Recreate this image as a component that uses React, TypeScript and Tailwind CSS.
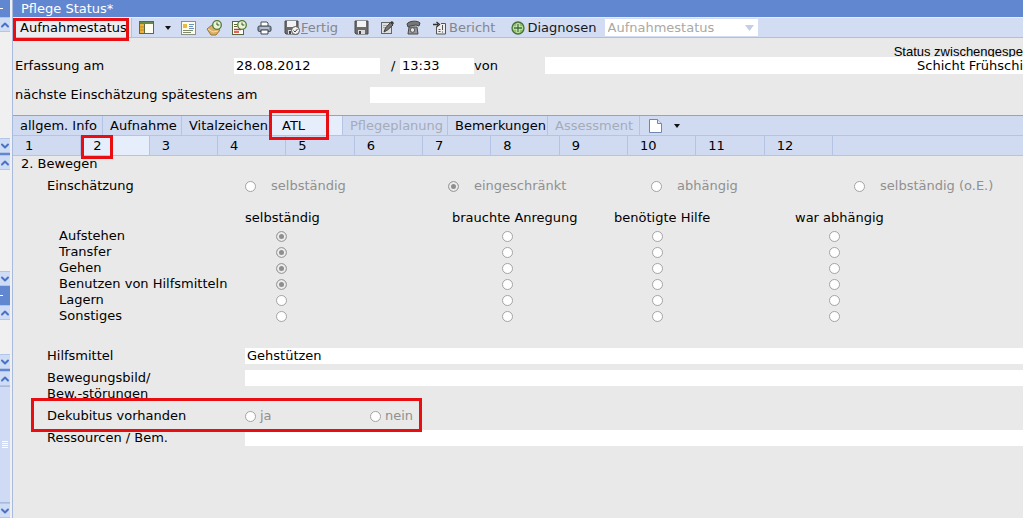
import { ChevronDown, ChevronUp } from "lucide-react";

const tabs = [
    { name: "allgem. Info", width: "w-[90px]" },
    { name: "Aufnahme", width: "w-[79px]" },
    { name: "Vitalzeichen", width: "w-[90px]" },
    { name: "ATL", width: "w-[71px]", active: true },
    { name: "Pflegeplanung", width: "w-[105px]", disabled: true },
    { name: "Bemerkungen", width: "w-[100px]" },
    { name: "Assessment", width: "w-[92px]", disabled: true },
];

const pages = [1, 2, 3, 4, 5, 6, 7, 8, 9, 10, 11, 12];

const levels = ["selbständig", "eingeschränkt", "abhängig", "selbständig (o.E.)"];

const columns = [
    { name: "selbständig", cell: "pl-[31px]" },
    { name: "brauchte Anregung", cell: "pl-[50px]" },
    { name: "benötigte Hilfe", cell: "pl-[38px]" },
    { name: "war abhängig", cell: "pl-[34px]" },
];

const activities = [
    { name: "Aufstehen", value: 0 },
    { name: "Transfer", value: 0 },
    { name: "Gehen", value: 0 },
    { name: "Benutzen von Hilfsmitteln", value: 0 },
    { name: "Lagern", value: -1 },
    { name: "Sonstiges", value: -1 },
];

const radio =
    "block h-[11px] w-[11px] shrink-0 appearance-none rounded-full border border-[#a3a3a3] bg-white checked:bg-[#8e8e8e] checked:shadow-[inset_0_0_0_2px_#ececec]";

const field = "min-w-0 bg-white px-[2px] outline-none";

// red frame around a part of the form
function Mark({ className }: { className: string }) {
    return <span aria-hidden="true" className={`pointer-events-none absolute z-10 border-3 border-[#e90e12] ${className}`} />;
}

function Caret() {
    return (
        <svg width="6" height="4" viewBox="0 0 6 4">
            <path d="M0 0h6L3 4z" fill="#111" />
        </svg>
    );
}

function LayoutIcon() {
    return (
        <svg width="15" height="13" viewBox="0 0 15 13">
            <rect x=".5" y=".5" width="14" height="12" fill="#fffdf0" stroke="#5d6b3a" />
            <path d="M1 1h13v2H1z" fill="#5f8a4c" />
            <path d="M1 3h4v9H1z" fill="#e8b33a" />
            <path d="M5.500 3v9" stroke="#5d6b3a" />
            <path d="M1 6h4M1 9h4" stroke="#c58a20" />
        </svg>
    );
}

function ListIcon() {
    return (
        <svg width="15" height="14" viewBox="0 0 15 14">
            <rect x=".5" y=".5" width="14" height="13" fill="#fdfbe9" stroke="#8b8f86" />
            <path d="M2 3h4v4H2z" fill="#e6bd3e" />
            <path d="M8 3.500h5M8 5.500h4M8 7.500h5" stroke="#6b8fc0" />
            <path d="M2 9.500h10M2 11.500h8" stroke="#7f8a6a" />
        </svg>
    );
}

function Clock() {
    return (
        <g>
            <circle cx="11" cy="5" r="4.300" fill="#e9f3d6" stroke="#4f7a34" strokeWidth="1.300" />
            <path d="M11 2.500V5h2.300" fill="none" stroke="#37502a" />
        </g>
    );
}

function HandClockIcon() {
    return (
        <svg width="17" height="16" viewBox="0 0 17 16">
            <path d="M1 9l5-4 8 5-4 5H5z" fill="#d9ae68" stroke="#9c7636" />
            <path d="M2 9l5 3 5-1" fill="none" stroke="#f4dcae" />
            <Clock />
        </svg>
    );
}

function ReportClockIcon() {
    return (
        <svg width="17" height="16" viewBox="0 0 17 16">
            <rect x="1.500" y="1.500" width="11" height="13" fill="#fff" stroke="#55663c" />
            <path d="M3 4.500h3M3 6.500h3" stroke="#5d6b3a" />
            <path d="M3 9.500h7M3 12h5" stroke="#dc2f22" strokeWidth="1.500" />
            <Clock />
        </svg>
    );
}

function PrinterIcon() {
    return (
        <svg width="15" height="14" viewBox="0 0 15 14">
            <path d="M4 5V1h6l1 1v3" fill="#fff" stroke="#444e5c" />
            <rect x="1" y="5" width="13" height="5.500" rx="1.500" fill="#8c98a6" stroke="#3c4654" />
            <path d="M4 9h7v4H4z" fill="#fff" stroke="#3c4654" />
            <path d="M3 7h9" stroke="#dfe5ec" />
        </svg>
    );
}

function DiskIcon({ checked = false }: { checked?: boolean }) {
    return (
        <svg width="16" height="15" viewBox="0 0 16 15">
            <path d="M1 1h13v13H2l-1-1z" fill="#6b6b6b" stroke="#4a4a4a" />
            <path d="M3 1h9v6H3z" fill="#f2f2f2" />
            <path d="M4 10h7v4H4z" fill="#d9d9d9" />
            <path d="M5 11h2v3H5z" fill="#444" />
            {checked && (
                <g>
                    <circle cx="11.500" cy="10.500" r="4" fill="#f1f1f1" stroke="#555" />
                    <path d="M9.500 10.500l1.500 1.500 2.500-3" fill="none" stroke="#444" />
                </g>
            )}
        </svg>
    );
}

function EditIcon() {
    return (
        <svg width="15" height="15" viewBox="0 0 15 15">
            <rect x="1.500" y="2.500" width="10" height="11" fill="#dedede" stroke="#666" />
            <path d="M3 5.500h4M3 7.500h3" stroke="#aaa" />
            <path d="M4 12l1.500-4 5-5.500 2.500 2.500-5.500 5z" fill="#777" stroke="#3d3d3d" />
            <path d="M10.500 2l1.500-1 2 2-1 1.500z" fill="#333" />
        </svg>
    );
}

function PhoneIcon() {
    return (
        <svg width="16" height="15" viewBox="0 0 16 15">
            <path d="M2 4c1-3 11-4 13-1l-1 3-3-1-6 1-2 1z" fill="#777" stroke="#444" />
            <path d="M4 7h8l1 7H3z" fill="#999" stroke="#4a4a4a" />
            <circle cx="7.500" cy="10" r="2.300" fill="#e4e4e4" stroke="#555" />
        </svg>
    );
}

function ReportIcon() {
    return (
        <svg width="14" height="14" viewBox="0 0 14 14">
            <path d="M3.500 6v7h9V2.500H8" fill="#eee" stroke="#555" />
            <path d="M0 3.500h5M3.500 1l3 2.500-3 2.500" fill="none" stroke="#333" strokeWidth="1.300" />
            <path d="M9.500 4v5M9.500 10.500v1M5.500 8.500h2M5.500 10.500h2" stroke="#555" />
        </svg>
    );
}

function PlusIcon() {
    return (
        <svg width="14" height="14" viewBox="0 0 14 14">
            <circle cx="7" cy="7" r="6" fill="#8cc46c" stroke="#4b6f3c" strokeWidth="1.300" />
            <path d="M7 2.500v9M2.500 7h9" stroke="#e4f5d8" strokeWidth="3" />
            <path d="M7 3v8M3 7h8" stroke="#3b6a2c" strokeWidth="1.300" />
        </svg>
    );
}

function ScrollButton({ up = false }: { up?: boolean }) {
    const Icon = up ? ChevronUp : ChevronDown;
    return (
        <button
            aria-label={up ? "nach oben" : "nach unten"}
            className="flex h-[15px] w-full shrink-0 items-center justify-center border-y border-[#b4c5ea] bg-[#cfdcf5]"
        >
            <Icon className="h-3 w-3 shrink-0 text-[#4a72c4]" strokeWidth={4} />
        </button>
    );
}

function Sidebar() {
    return (
        <aside className="flex w-[13px] shrink-0 flex-col border-r border-[#a9bbdd] bg-[#f0f0f0] pr-[2px]">
            <div className="flex h-[17px] items-center bg-[#6187d1]">
                <span className="h-px w-[3px] bg-white" />
            </div>
            <ScrollButton up />
            <div className="h-[106px]" />
            <ScrollButton />
            <div className="h-[2px] bg-[#6187d1]" />
            <ScrollButton up />
            <div className="h-[101px]" />
            <ScrollButton />
            <div className="flex h-[19px] items-center bg-[#6187d1]">
                <span className="h-px w-[3px] bg-white" />
            </div>
            <ScrollButton up />
            <div className="h-[34px]" />
            <ScrollButton />
            <div className="h-[2px] bg-[#6187d1]" />
            <ScrollButton up />
            <div className="flex flex-1 flex-col items-center justify-center gap-px border-y border-[#a9bbdd] bg-[#cfdaf4]">
                <span className="h-px w-[6px] bg-white" />
                <span className="h-px w-[6px] bg-white" />
                <span className="h-px w-[6px] bg-white" />
                <span className="h-px w-[6px] bg-white" />
            </div>
            <ScrollButton />
        </aside>
    );
}

function Toolbar() {
    return (
        <div className="flex h-[21px] items-center border-y border-t-[#e4ecf8] border-b-[#afbfdf] bg-[#d2dcf2]">
            <div className="relative flex h-full w-[119px] shrink-0 items-center border-r border-[#b4c2e2] bg-[#ebedf1] pl-[7px]">
                Aufnahmestatus
                <Mark className="top-0 left-0 h-[23px] w-[116px]" />
            </div>
            <div className="flex shrink-0 items-center pl-[7px] text-[#84868c]">
                <button aria-label="Ansicht"><LayoutIcon /></button>
                <button aria-label="Ansicht wählen" className="ml-[11px]"><Caret /></button>
                <button aria-label="Liste" className="ml-[10px]"><ListIcon /></button>
                <button aria-label="Termin" className="ml-[10px]"><HandClockIcon /></button>
                <button aria-label="Verlauf" className="ml-2"><ReportClockIcon /></button>
                <button aria-label="Drucken" className="ml-[9px]"><PrinterIcon /></button>
                <button className="ml-3 flex items-center gap-px">
                    <DiskIcon checked />
                    <span><u>F</u>ertig</span>
                </button>
                <button aria-label="Speichern" className="ml-4"><DiskIcon /></button>
                <button aria-label="Bearbeiten" className="ml-[10px]"><EditIcon /></button>
                <button aria-label="Telefon" className="ml-[10px]"><PhoneIcon /></button>
                <button className="ml-3 flex items-center gap-[2px]"><ReportIcon />Bericht</button>
                <button className="ml-4 flex items-center gap-[2px] text-[#16181d]"><PlusIcon />Diagnosen</button>
            </div>
            <div className="relative ml-2 flex h-[17px] w-[153px] shrink-0 items-center">
                <select aria-label="Status" disabled className="h-full w-full appearance-none bg-white px-[3px] leading-4 text-[#aaa9a3] opacity-100">
                    <option>Aufnahmestatus</option>
                </select>
                <svg className="pointer-events-none absolute right-1" width="9" height="6" viewBox="0 0 9 6">
                    <path d="M0 0h9L4.500 6z" fill="#c3cfe6" />
                </svg>
            </div>
        </div>
    );
}

function Header() {
    return (
        <div className="pb-3 pl-[2px]">
            <p className="h-[19px] pt-[6px] text-right font-['Liberation_Sans',sans-serif] whitespace-nowrap">
                Status zwischengespe
            </p>
            <div className="flex h-[17px] items-center">
                <label htmlFor="datum" className="w-[219px] shrink-0">Erfassung am</label>
                <input id="datum" defaultValue="28.08.2012" className={`${field} h-4 w-[146px]`} />
                <label htmlFor="zeit" className="w-5 shrink-0 pl-[11px]">/</label>
                <input id="zeit" defaultValue="13:33" className={`${field} h-4 w-[74px]`} />
                <label htmlFor="schicht" className="w-[71px] shrink-0">von</label>
                <input id="schicht" defaultValue="Schicht Frühschi" className="h-full min-w-0 flex-1 bg-white text-right outline-none" />
            </div>
            <div className="mt-[13px] flex h-4 items-center">
                <label htmlFor="naechste" className="w-[355px] shrink-0">nächste Einschätzung spätestens am</label>
                <input id="naechste" className={`${field} h-4 w-[115px]`} />
            </div>
        </div>
    );
}

function Tabs() {
    return (
        <nav className="border-t border-[#8fa3cf] bg-[#d0dbf2]">
            <div className="flex h-5 border-b border-[#b5c3e4]">
                {tabs.map((tab) => (
                    <div key={tab.name} className={`relative flex shrink-0 border-r border-[#b5c3e4] ${tab.width}`}>
                        <button
                            disabled={tab.disabled}
                            className={`w-full pt-px text-left whitespace-nowrap disabled:text-[#a6abb8] ${tab.active ? "bg-[#e6edfb] pl-[10px]" : "pl-[7px]"}`}
                        >
                            {tab.name}
                        </button>
                        {tab.active && <Mark className="-top-[6px] -left-[3px] h-[30px] w-[60px]" />}
                    </div>
                ))}
                <button aria-label="Neues Dokument" className="flex items-center gap-3 pl-[9px]">
                    <svg width="13" height="14" viewBox="0 0 13 14">
                        <path d="M.5.5h8l4 4v9H.5z" fill="#fff" stroke="#6f86b5" />
                        <path d="M8.500.5v4h4" fill="#dce6f7" stroke="#6f86b5" />
                    </svg>
                    <Caret />
                </button>
            </div>
            <div className="flex h-5 border-b border-[#b5c3e4]">
                <div className="grid w-[820px] max-w-full grid-cols-12">
                    {pages.map((page) => (
                        <div key={page} className="relative flex border-r border-[#b5c3e4]">
                            <button className={`w-full pl-3 text-left ${page === 2 ? "bg-[#e6edfb]" : ""}`}>{page}</button>
                            {page === 2 && <Mark className="-top-px left-0 h-6 w-8" />}
                        </div>
                    ))}
                </div>
            </div>
        </nav>
    );
}

function Assessment() {
    return (
        <section>
            <h2 className="pl-2 leading-4">2. Bewegen</h2>
            <fieldset className="mt-[6px] flex items-center pl-[34px]">
                <legend className="float-left w-[198px]">Einschätzung</legend>
                {levels.map((level, index) => (
                    <label key={level} className="flex w-[203px] items-center gap-[15px] whitespace-nowrap text-[#909090]">
                        <input type="radio" name="einschaetzung" disabled defaultChecked={index === 1} className={radio} />
                        {level}
                    </label>
                ))}
            </fieldset>

            <table className="mt-4 ml-[46px] table-fixed border-collapse text-left">
                <colgroup>
                    <col className="w-[186px]" />
                    <col className="w-[207px]" />
                    <col className="w-[162px]" />
                    <col className="w-[181px]" />
                    <col className="w-[160px]" />
                </colgroup>
                <thead>
                    <tr className="h-[18px] align-top">
                        <td />
                        {columns.map((column) => (
                            <th key={column.name} scope="col" className="p-0 font-normal whitespace-nowrap">{column.name}</th>
                        ))}
                    </tr>
                </thead>
                <tbody>
                    {activities.map((activity) => (
                        <tr key={activity.name} className="h-4">
                            <th scope="row" className="p-0 font-normal whitespace-nowrap">{activity.name}</th>
                            {columns.map((column, index) => (
                                <td key={column.name} className={column.cell}>
                                    <input
                                        type="radio"
                                        name={activity.name}
                                        aria-label={`${activity.name}: ${column.name}`}
                                        defaultChecked={activity.value === index}
                                        className={radio}
                                    />
                                </td>
                            ))}
                        </tr>
                    ))}
                </tbody>
            </table>

            <div className="mt-6 flex flex-col gap-[6px] pl-[34px]">
                <div className="flex h-4">
                    <label htmlFor="hilfsmittel" className="w-[198px] shrink-0">Hilfsmittel</label>
                    <input id="hilfsmittel" defaultValue="Gehstützen" className={`${field} flex-1`} />
                </div>
                <div className="flex items-start">
                    <label htmlFor="bewegungsbild" className="w-[198px] shrink-0">Bewegungsbild/<br />Bew.-störungen</label>
                    <input id="bewegungsbild" className={`${field} h-4 flex-1`} />
                </div>
                <fieldset className="relative flex h-4 items-center text-[#909090]">
                    <legend className="float-left w-[198px] text-black">Dekubitus vorhanden</legend>
                    <label className="flex w-[125px] items-center gap-1">
                        <input type="radio" name="dekubitus" disabled className={radio} />
                        ja
                    </label>
                    <label className="flex items-center gap-1">
                        <input type="radio" name="dekubitus" disabled className={radio} />
                        nein
                    </label>
                    <Mark className="-top-[10px] -left-4 h-[34px] w-[391px]" />
                </fieldset>
                <div className="flex h-4">
                    <label htmlFor="ressourcen" className="w-[198px] shrink-0">Ressourcen / Bem.</label>
                    <input id="ressourcen" className={`${field} flex-1`} />
                </div>
            </div>
        </section>
    );
}

export default function App() {
    return (
        <div className="flex min-h-screen overflow-hidden bg-[#e9e9e9] font-['DejaVu_Sans',sans-serif] text-[13px] leading-4 text-black">
            <Sidebar />
            <main className="min-w-0 flex-1">
                <h1 className="h-[17px] bg-[#6187d1] pt-px pl-2 text-white">Pflege Status*</h1>
                <Toolbar />
                <Header />
                <Tabs />
                <Assessment />
            </main>
        </div>
    );
}
